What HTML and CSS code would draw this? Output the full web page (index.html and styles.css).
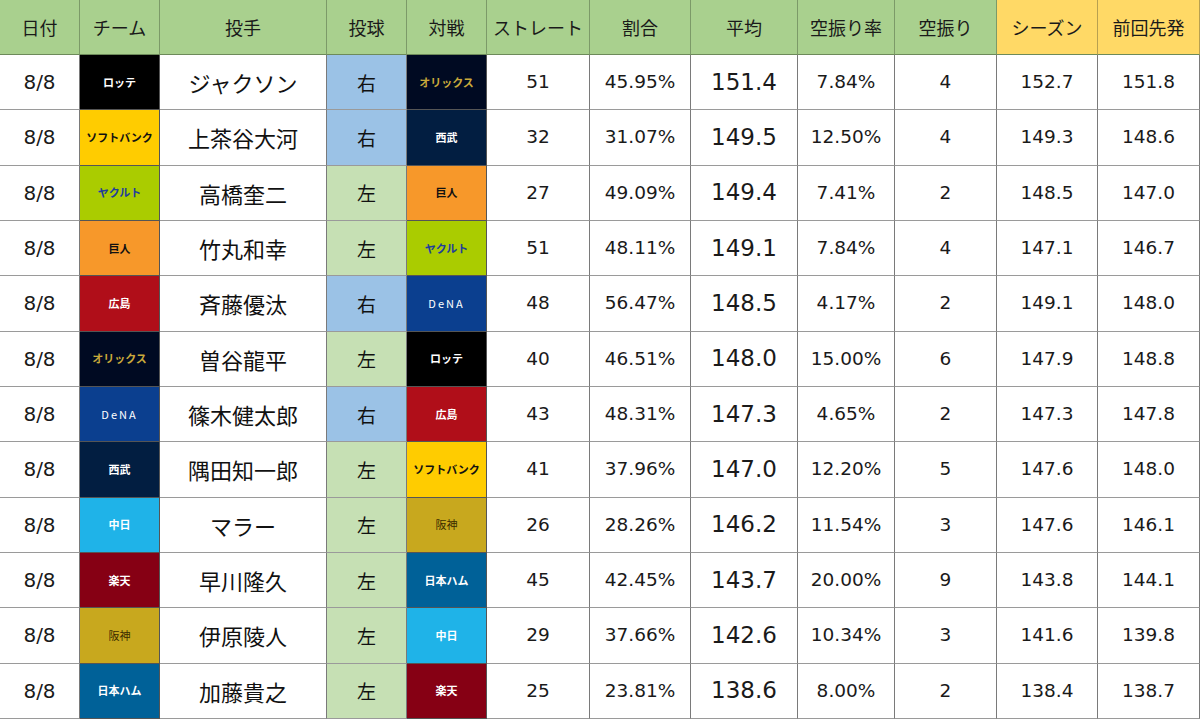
FILE: index.html
```html
<!DOCTYPE html>
<html lang="ja">
<head>
<meta charset="utf-8">
<link rel="stylesheet" href="styles.css">
</head>
<body>
<div class="table">
  <div class="h">日付</div><div class="h">チーム</div><div class="h">投手</div><div class="h">投球</div><div class="h">対戦</div><div class="h">ストレート</div><div class="h">割合</div><div class="h">平均</div><div class="h">空振り率</div><div class="h">空振り</div><div class="h y">シーズン</div><div class="h y">前回先発</div>

  <div class="c d">8/8</div><div class="c t lotte">ロッテ</div><div class="c n">ジャクソン</div><div class="c hand r">右</div><div class="c t orix">オリックス</div><div class="c v">51</div><div class="c v">45.95%</div><div class="c avg">151.4</div><div class="c v">7.84%</div><div class="c v">4</div><div class="c v">152.7</div><div class="c v">151.8</div>

  <div class="c d">8/8</div><div class="c t sb">ソフトバンク</div><div class="c n">上茶谷大河</div><div class="c hand r">右</div><div class="c t seibu">西武</div><div class="c v">32</div><div class="c v">31.07%</div><div class="c avg">149.5</div><div class="c v">12.50%</div><div class="c v">4</div><div class="c v">149.3</div><div class="c v">148.6</div>

  <div class="c d">8/8</div><div class="c t yak">ヤクルト</div><div class="c n">高橋奎二</div><div class="c hand l">左</div><div class="c t gia">巨人</div><div class="c v">27</div><div class="c v">49.09%</div><div class="c avg">149.4</div><div class="c v">7.41%</div><div class="c v">2</div><div class="c v">148.5</div><div class="c v">147.0</div>

  <div class="c d">8/8</div><div class="c t gia">巨人</div><div class="c n">竹丸和幸</div><div class="c hand l">左</div><div class="c t yak">ヤクルト</div><div class="c v">51</div><div class="c v">48.11%</div><div class="c avg">149.1</div><div class="c v">7.84%</div><div class="c v">4</div><div class="c v">147.1</div><div class="c v">146.7</div>

  <div class="c d">8/8</div><div class="c t hiro">広島</div><div class="c n">斉藤優汰</div><div class="c hand r">右</div><div class="c t dena">DeNA</div><div class="c v">48</div><div class="c v">56.47%</div><div class="c avg">148.5</div><div class="c v">4.17%</div><div class="c v">2</div><div class="c v">149.1</div><div class="c v">148.0</div>

  <div class="c d">8/8</div><div class="c t orix">オリックス</div><div class="c n">曽谷龍平</div><div class="c hand l">左</div><div class="c t lotte">ロッテ</div><div class="c v">40</div><div class="c v">46.51%</div><div class="c avg">148.0</div><div class="c v">15.00%</div><div class="c v">6</div><div class="c v">147.9</div><div class="c v">148.8</div>

  <div class="c d">8/8</div><div class="c t dena">DeNA</div><div class="c n">篠木健太郎</div><div class="c hand r">右</div><div class="c t hiro">広島</div><div class="c v">43</div><div class="c v">48.31%</div><div class="c avg">147.3</div><div class="c v">4.65%</div><div class="c v">2</div><div class="c v">147.3</div><div class="c v">147.8</div>

  <div class="c d">8/8</div><div class="c t seibu">西武</div><div class="c n">隅田知一郎</div><div class="c hand l">左</div><div class="c t sb">ソフトバンク</div><div class="c v">41</div><div class="c v">37.96%</div><div class="c avg">147.0</div><div class="c v">12.20%</div><div class="c v">5</div><div class="c v">147.6</div><div class="c v">148.0</div>

  <div class="c d">8/8</div><div class="c t chu">中日</div><div class="c n">マラー</div><div class="c hand l">左</div><div class="c t han">阪神</div><div class="c v">26</div><div class="c v">28.26%</div><div class="c avg">146.2</div><div class="c v">11.54%</div><div class="c v">3</div><div class="c v">147.6</div><div class="c v">146.1</div>

  <div class="c d">8/8</div><div class="c t raku">楽天</div><div class="c n">早川隆久</div><div class="c hand l">左</div><div class="c t ham">日本ハム</div><div class="c v">45</div><div class="c v">42.45%</div><div class="c avg">143.7</div><div class="c v">20.00%</div><div class="c v">9</div><div class="c v">143.8</div><div class="c v">144.1</div>

  <div class="c d">8/8</div><div class="c t han">阪神</div><div class="c n">伊原陵人</div><div class="c hand l">左</div><div class="c t chu">中日</div><div class="c v">29</div><div class="c v">37.66%</div><div class="c avg">142.6</div><div class="c v">10.34%</div><div class="c v">3</div><div class="c v">141.6</div><div class="c v">139.8</div>

  <div class="c d">8/8</div><div class="c t ham">日本ハム</div><div class="c n">加藤貴之</div><div class="c hand l">左</div><div class="c t raku">楽天</div><div class="c v">25</div><div class="c v">23.81%</div><div class="c avg">138.6</div><div class="c v">8.00%</div><div class="c v">2</div><div class="c v">138.4</div><div class="c v">138.7</div>
</div>
</body>
</html>
```
FILE: styles.css
```css
* { box-sizing: border-box; }
html, body { margin: 0; padding: 0; background: #fff; }
body {
  font-family: "Noto Sans CJK JP", "Noto Sans", sans-serif;
  color: #111;
}
.table {
  display: grid;
  width: 1200px;
  height: 719px;
  grid-template-columns: 80px 80px 167px 80px 80px 103px 101px 107px 97px 102px 101px 102px;
  grid-template-rows: 55px repeat(12, 1fr);
  overflow: hidden;
}
.table > div {
  display: flex;
  align-items: center;
  justify-content: center;
  border-right: 1px solid #7a7a7a;
  border-bottom: 1px solid #9a9a9a;
  white-space: nowrap;
  line-height: 1;
}
.h {
  background: #a9d08e;
  font-size: 18px;
  color: #1a1a1a;
  border-bottom: 1px solid #6d8a5a !important;
  border-right-color: #7c9a68 !important;
}
.h.y { background: #ffd966; border-right-color: #b8a050 !important; }
.d, .v, .avg {
  font-family: "DejaVu Sans", "Noto Sans CJK JP", sans-serif;
  font-weight: 400;
  color: #1a1a1a;
}
.d { font-size: 20px; }
.n { font-size: 22px; }
.v { font-size: 18.5px; }
.avg { font-size: 23px; }
.hand { font-size: 19px; }
.r { background: #9bc2e6; }
.l { background: #c6e0b4; }
.t {
  font-size: 11px;
  font-weight: 700;
  color: #fff;
  border-right-color: #555 !important;
  border-bottom-color: #555 !important;
}
.lotte { background: #000000; }
.sb { background: #ffcc00; color: #111 !important; }
.yak { background: #aacc00; color: #1f3d9c !important; }
.gia { background: #f7982a; color: #111 !important; }
.hiro { background: #b00e19; }
.orix { background: #000a22; color: #c9a93b !important; }
.dena { background: #0b3f8f; letter-spacing: 2px; font-weight: 400; }
.seibu { background: #021e41; }
.chu { background: #1fb3e8; }
.raku { background: #860014; }
.han { background: #c8a81e; color: #3a2c00 !important; font-weight: 400; }
.ham { background: #006198; }
```
